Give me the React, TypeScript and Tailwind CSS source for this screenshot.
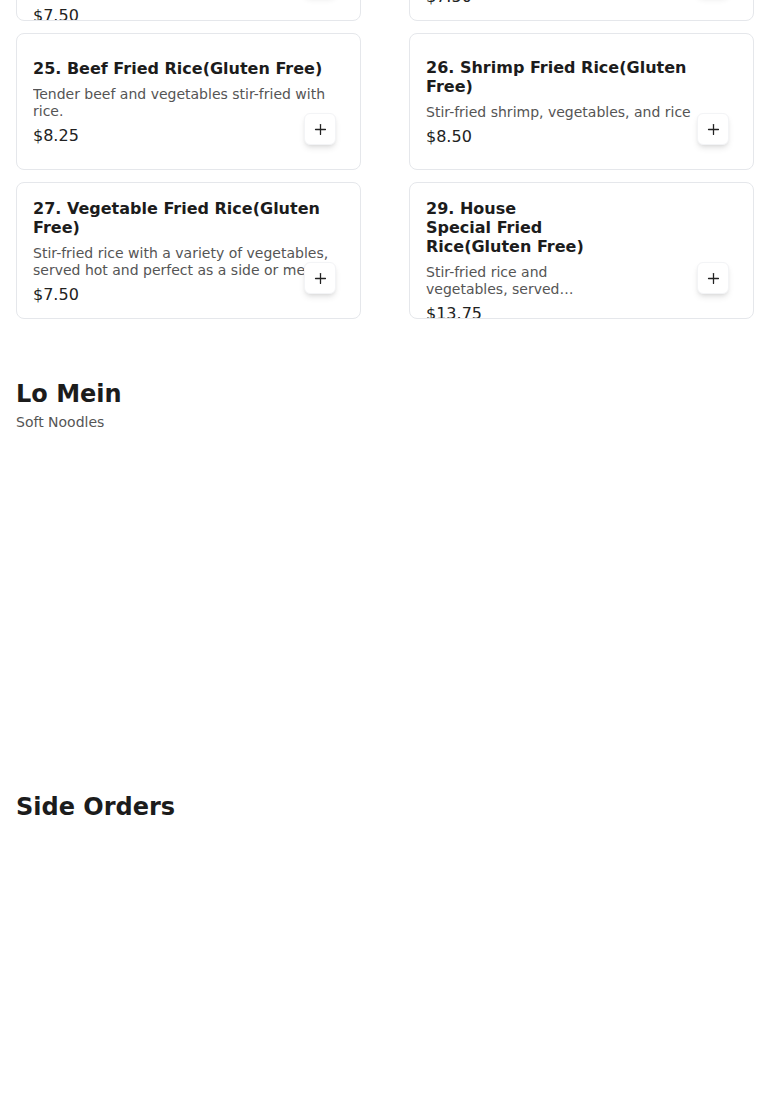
import { Plus } from 'lucide-react';

type Item = {
  name: string;
  description: string;
  price: string;
  narrow?: boolean;
};

const friedRice: Item[] = [
  {
    name: '23. Roast Pork Fried Rice(Gluten Free)',
    description: 'Roast pork and vegetables stir-fried with rice, served hot.',
    price: '$7.50',
    narrow: true,
  },
  {
    name: '24. Chicken Fried Rice(Gluten Free)',
    description: 'Tender chicken, egg and vegetables stir-fried with seasoned rice, served hot.',
    price: '$7.50',
  },
  {
    name: '25. Beef Fried Rice(Gluten Free)',
    description: 'Tender beef and vegetables stir-fried with rice.',
    price: '$8.25',
  },
  {
    name: '26. Shrimp Fried Rice(Gluten Free)',
    description: 'Stir-fried shrimp, vegetables, and rice',
    price: '$8.50',
  },
  {
    name: '27. Vegetable Fried Rice(Gluten Free)',
    description:
      'Stir-fried rice with a variety of vegetables, served hot and perfect as a side or meal.',
    price: '$7.50',
  },
  {
    name: '29. House Special Fried Rice(Gluten Free)',
    description:
      'Stir-fried rice and vegetables, served with shrimp, chicken, beef and roast pork.',
    price: '$13.75',
    narrow: true,
  },
];

function MenuCard({ item }: { item: Item }) {
  return (
    <div className="relative flex h-[137px] flex-col overflow-hidden rounded-lg border border-gray-200 bg-white p-4">
      <div className={`my-auto ${item.narrow ? 'w-[159px]' : ''}`}>
        <h3 className="text-base font-bold leading-[19px] text-[#1c1c1c]">{item.name}</h3>
        <p className="mt-2 line-clamp-2 text-sm leading-[17px] text-[#555]">{item.description}</p>
        <p className="mt-1.5 text-base leading-[19px] text-[#222]">{item.price}</p>
      </div>
      <button className="absolute bottom-6 right-6 flex h-8 w-8 items-center justify-center rounded-md border border-gray-100 bg-white text-[#222] shadow-md">
        <Plus size={17} strokeWidth={1.8} />
      </button>
    </div>
  );
}

export default function App() {
  return (
    <div className="min-h-screen bg-white font-['DejaVu_Sans',sans-serif]">
      <main className="-mt-[116px] px-4 pb-16">
        <section>
          <div className="grid grid-cols-2 gap-x-12 gap-y-3">
            {friedRice.map((item) => (
              <MenuCard key={item.name} item={item} />
            ))}
          </div>
        </section>

        <section className="mt-[59px]">
          <h2 className="text-2xl font-bold leading-8 text-[#1c1c1c]">Lo Mein</h2>
          <p className="mt-0.5 text-sm leading-5 text-[#555]">Soft Noodles</p>
          <div className="h-[359px]" />
        </section>

        <section>
          <h2 className="text-2xl font-bold leading-8 text-[#1c1c1c]">Side Orders</h2>
          <div className="h-[300px]" />
        </section>
      </main>
    </div>
  );
}
